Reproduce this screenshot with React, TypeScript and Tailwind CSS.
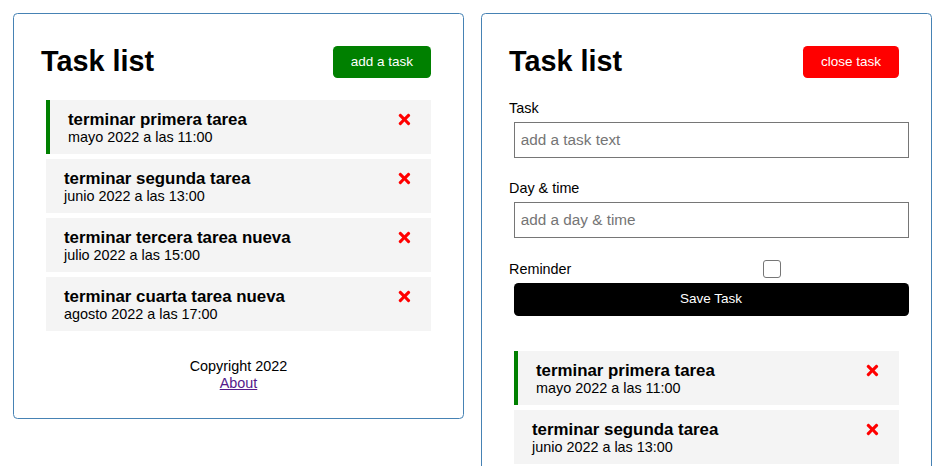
import React from "react";
import { FaTimes } from "react-icons/fa";

type Task = { id: number; text: string; day: string; reminder: boolean };

const allTasks: Task[] = [
  { id: 1, text: "terminar primera tarea", day: "mayo 2022 a las 11:00", reminder: true },
  { id: 2, text: "terminar segunda tarea", day: "junio 2022 a las 13:00", reminder: false },
  { id: 3, text: "terminar tercera tarea nueva", day: "julio 2022 a las 15:00", reminder: false },
  { id: 4, text: "terminar cuarta tarea nueva", day: "agosto 2022 a las 17:00", reminder: false },
];

function Header({ showAdd }: { showAdd: boolean }) {
  return (
    <header className="flex items-center justify-between h-[41px] mb-[18px]">
      <h1 className="text-[28.8px] font-bold leading-[33px]">Task list</h1>
      <button
        className={
          "h-[32px] ml-[4.5px] mr-[5px] px-[18px] rounded-[4.5px] text-white text-[13.5px] leading-[16px] " +
          (showAdd ? "bg-[#ff0000]" : "bg-[#008000]")
        }
      >
        {showAdd ? "close task" : "add a task"}
      </button>
    </header>
  );
}

function TaskItem({ task }: { task: Task }) {
  return (
    <div
      className={
        "bg-[#f4f4f4] ml-[5px] mr-[5px] pt-[10px] pb-[8px] px-[18px] h-[54px] " +
        (task.reminder ? "border-l-[4px] border-[#008000] pl-[18px]" : "")
      }
    >
      <h3 className="flex items-center justify-between text-[16.85px] font-bold leading-[19.4px]">
        {task.text}
        <FaTimes className="text-[#ff0000] cursor-pointer" />
      </h3>
      <p className="text-[14.4px] leading-[17.5px]">{task.day}</p>
    </div>
  );
}

function Tasks({ tasks }: { tasks: Task[] }) {
  return (
    <div className="flex flex-col gap-[5px]">
      {tasks.map((t) => (
        <TaskItem key={t.id} task={t} />
      ))}
    </div>
  );
}

function AddForm() {
  return (
    <form className="mb-[35px]" onSubmit={(e) => e.preventDefault()}>
      <div className="mb-[22.5px]">
        <label className="block text-[14.4px] leading-[16.6px]">Task</label>
        <input
          type="text"
          placeholder="add a task text"
          className="block w-full h-[36px] mx-[4.5px] mt-[5px] px-[6.3px] py-[2.7px] border border-[#767676] text-[15.3px] placeholder:text-[#757575] outline-none"
        />
      </div>
      <div className="mb-[22.5px]">
        <label className="block text-[14.4px] leading-[16.6px]">Day &amp; time</label>
        <input
          type="text"
          placeholder="add a day & time"
          className="block w-full h-[36px] mx-[4.5px] mt-[5px] px-[6.3px] py-[2.7px] border border-[#767676] text-[15.3px] placeholder:text-[#757575] outline-none"
        />
      </div>
      <div className="flex items-center h-[18px]">
        <label className="flex-1 text-[14.4px] leading-[16.6px]">Reminder</label>
        <div className="flex-[2] flex justify-center">
          <input
            type="checkbox"
            className="appearance-none w-[18px] h-[18px] border border-[#767676] rounded-[3px] bg-white"
          />
        </div>
      </div>
      <button
        type="submit"
        className="block w-full h-[33px] mx-[4.5px] mt-[4.5px] bg-black text-white rounded-[4.5px] text-[13.5px]"
      >
        Save Task
      </button>
    </form>
  );
}

export default function App() {
  return (
    <div
      className="flex items-start gap-[17px] pl-[13px] pt-[13px] text-black bg-white"
      style={{ fontFamily: '"Liberation Sans", Arial, sans-serif' }}
    >
      <div className="w-[451px] border border-[#4682b4] rounded-[4.5px] p-[27px]">
        <Header showAdd={false} />
        <Tasks tasks={allTasks} />
        <footer className="mt-[27px] text-center text-[14.4px] leading-[16.6px]">
          <p>Copyright 2022</p>
          <a href="#" className="underline text-[#551a8b]">
            About
          </a>
        </footer>
      </div>
      <div className="w-[451px] border border-[#4682b4] rounded-[4.5px] p-[27px]">
        <Header showAdd={true} />
        <AddForm />
        <Tasks tasks={allTasks} />
      </div>
    </div>
  );
}
